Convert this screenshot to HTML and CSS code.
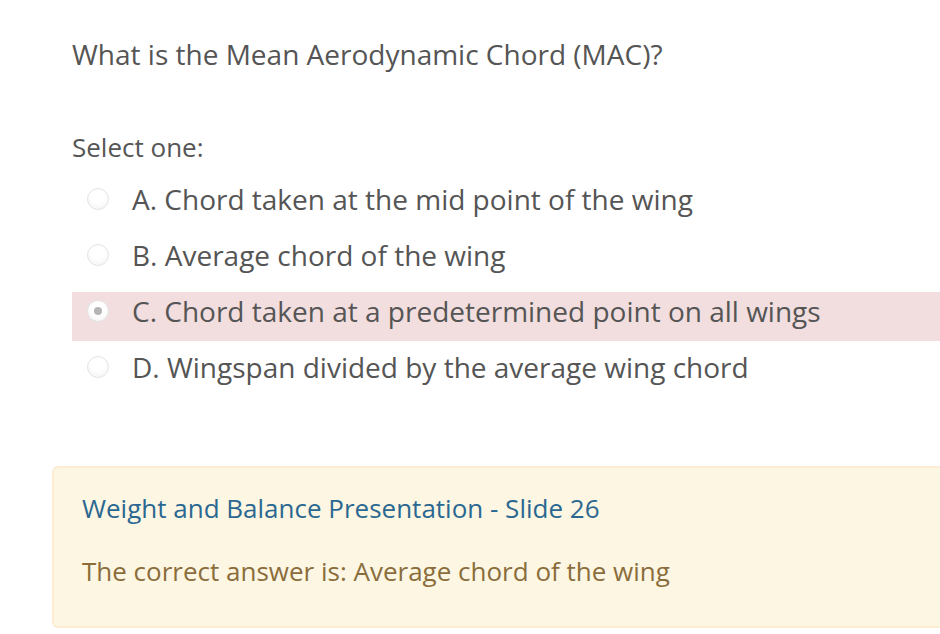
FILE: index.html
```html
<!DOCTYPE html>
<html>
<head>
<meta charset="utf-8">
<link rel="stylesheet" href="styles.css">
</head>
<body>
<div class="page">
  <div class="qtext">What is the Mean Aerodynamic Chord (MAC)?</div>
  <div class="prompt">Select one:</div>
  <div class="answers">
    <div class="opt"><span class="radio"></span><span class="label">A. Chord taken at the mid point of the wing</span></div>
    <div class="opt"><span class="radio"></span><span class="label">B. Average chord of the wing</span></div>
    <div class="opt incorrect"><span class="radio checked"></span><span class="label">C. Chord taken at a predetermined point on all wings</span></div>
    <div class="opt"><span class="radio"></span><span class="label">D. Wingspan divided by the average wing chord</span></div>
  </div>
  <div class="feedback">
    <a class="ref" href="#">Weight and Balance Presentation - Slide 26</a>
    <div class="right">The correct answer is: Average chord of the wing</div>
  </div>
</div>
</body>
</html>
```
FILE: styles.css
```css
html, body {
  margin: 0;
  padding: 0;
  background: #fff;
}
body {
  font-family: "Open Sans", sans-serif;
  color: #555;
  width: 940px;
  height: 634px;
  overflow: hidden;
}
.page {
  padding: 34px 0 0 72px;
}
.qtext {
  font-size: 28px;
  line-height: 40px;
  color: #555;
}
.prompt {
  margin-top: 53px;
  font-size: 26px;
  line-height: 40px;
}
.answers {
  margin-top: 13px;
  display: flex;
  flex-direction: column;
  gap: 7px;
}
.opt {
  display: flex;
  align-items: center;
  height: 49px;
  padding: 0 0 11px 15px;
  box-sizing: border-box;
  font-size: 28px;
}
.opt.incorrect {
  background: #f2dede;
}
.radio {
  width: 22px;
  height: 22px;
  border-radius: 50%;
  border: 1px solid #e4e4e4;
  background: radial-gradient(circle at 50% 35%, #ffffff 40%, #f2f2f2 100%);
  box-sizing: border-box;
  margin-right: 23px;
  position: relative;
  flex: none;
}
.radio.checked::after {
  content: "";
  position: absolute;
  left: 6px;
  top: 6px;
  width: 8px;
  height: 8px;
  border-radius: 50%;
  background: #b5b5b5;
}
.feedback {
  margin: 69px 0 0 -20px;
  background: #fcf6e3;
  border: 2px solid #fbecd3;
  border-right: none;
  border-radius: 6px 0 0 6px;
  height: 162px;
  padding: 20px 0 0 28px;
  box-sizing: border-box;
  font-size: 26px;
  line-height: 40px;
}
.ref {
  display: block;
  color: #2b6891;
  text-decoration: none;
}
.right {
  margin-top: 23px;
  color: #8a6d3b;
}
```
